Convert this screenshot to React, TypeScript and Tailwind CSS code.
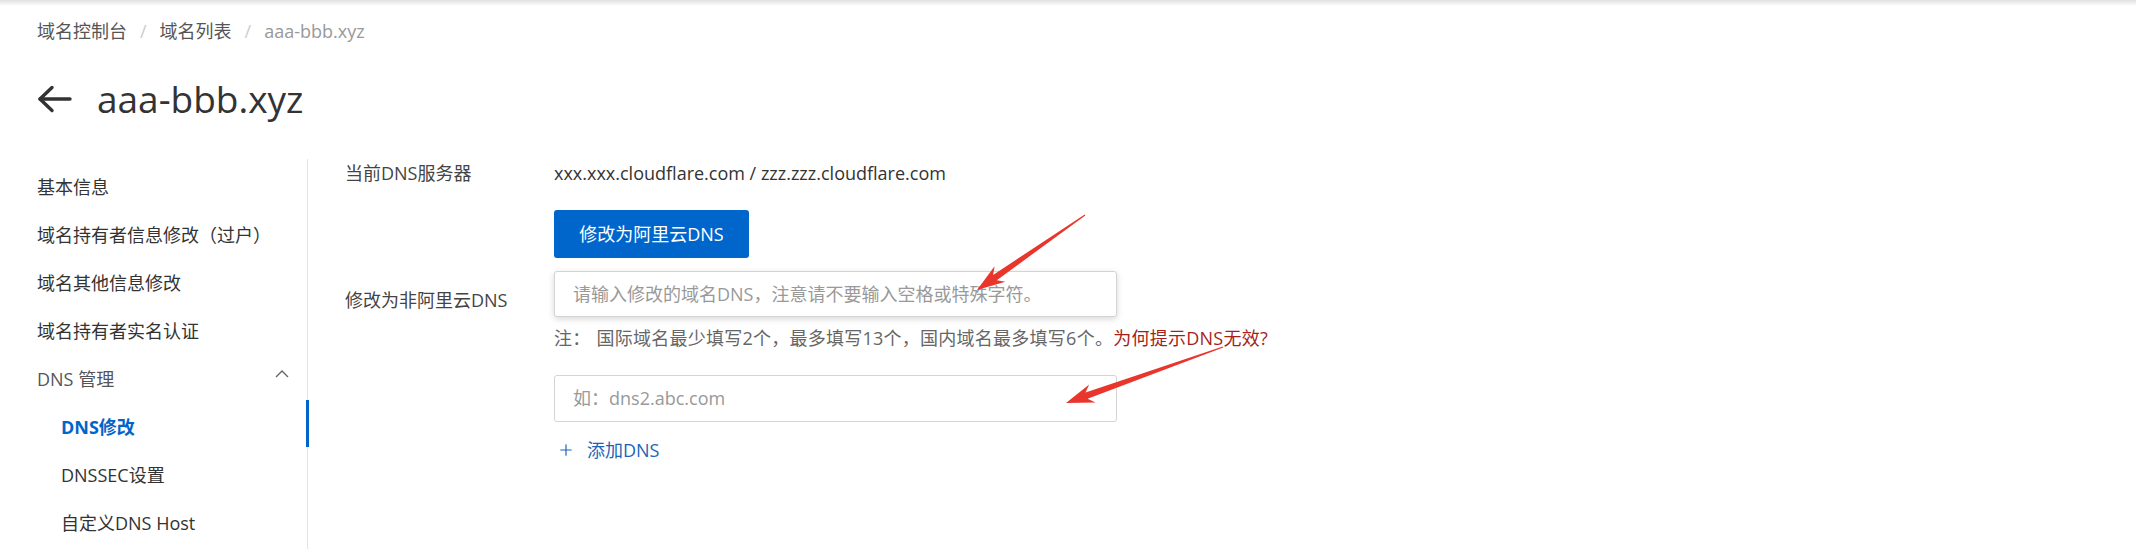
import { Plus } from 'lucide-react'

const sideItems = [
  { label: '基本信息' },
  { label: '域名持有者信息修改（过户）' },
  { label: '域名其他信息修改' },
  { label: '域名持有者实名认证' },
]

const dnsChildren = [
  { label: 'DNS修改', active: true },
  { label: 'DNSSEC设置' },
  { label: '自定义DNS Host' },
]

// annotation arrow: thin tail growing into a filled head at (x2, y2)
function arrowPoints(x1: number, y1: number, x2: number, y2: number) {
  const dx = x2 - x1
  const dy = y2 - y1
  const len = Math.hypot(dx, dy)
  const ux = dx / len
  const uy = dy / len
  const nx = -uy
  const ny = ux
  const headLen = 28
  const join = { x: x2 - ux * headLen * 0.78, y: y2 - uy * headLen * 0.78 }
  const barb = { x: x2 - ux * headLen, y: y2 - uy * headLen }
  const pts = [
    [x1 + nx * 0.6, y1 + ny * 0.6],
    [join.x + nx * 3.2, join.y + ny * 3.2],
    [barb.x + nx * 9.5, barb.y + ny * 9.5],
    [x2, y2],
    [barb.x - nx * 9.5, barb.y - ny * 9.5],
    [join.x - nx * 3.2, join.y - ny * 3.2],
    [x1 - nx * 0.6, y1 - ny * 0.6],
  ]
  return pts.map(p => p.map(v => v.toFixed(1)).join(',')).join(' ')
}

export default function App() {
  return (
    <div className="relative w-full h-[549px] overflow-hidden bg-white text-[18px] text-[#333] font-['Open_Sans','Noto_Sans_CJK_SC',sans-serif]">
      <div className="h-[6px] bg-linear-to-b from-[#e0e0e0] to-white" />

      {/* breadcrumb */}
      <div className="flex items-center px-[37px] mt-[13px] h-[24px] leading-[24px] text-[18px]">
        <span className="text-[#555]">域名控制台</span>
        <span className="mx-[13px] text-[#ccc]">/</span>
        <span className="text-[#555]">域名列表</span>
        <span className="mx-[13px] text-[#ccc]">/</span>
        <span className="text-[#999]">aaa-bbb.xyz</span>
      </div>

      {/* title */}
      <div className="flex items-center gap-[25px] px-[37px] mt-[32px] h-[48px]">
        <svg width="35" height="28" viewBox="0 0 35 28" fill="none" stroke="#333" strokeWidth="3.4" strokeLinecap="round" strokeLinejoin="round">
          <path d="M3 14h30" />
          <path d="M15 2.5 3 14l12 11.5" />
        </svg>
        <h1 className="text-[37px] leading-[48px] text-[#333]">aaa-bbb.xyz</h1>
      </div>

      <div className="flex mt-[36px]">
        {/* sidebar */}
        <nav className="w-[308px] shrink-0 h-[400px] border-r border-[#e3e3e3] pt-[4px]">
          {sideItems.map(item => (
            <div key={item.label} className="h-[48px] flex items-center pl-[37px] text-[#333]">{item.label}</div>
          ))}
          <div className="h-[48px] flex items-center justify-between pl-[37px] pr-[18px] text-[#555]">
            <span>DNS 管理</span>
            <svg width="14" height="9" viewBox="0 0 14 9" fill="none" stroke="#666" strokeWidth="1.4" className="-mt-[12px]">
              <path d="M1 8 7 2l6 6" />
            </svg>
          </div>
          {dnsChildren.map(item => (
            <div
              key={item.label}
              className={`relative h-[48px] flex items-center pl-[61px] ${item.active ? 'text-[#0064c8] font-bold' : 'text-[#333]'}`}
            >
              {item.label}
              {item.active && <span className="absolute -right-[2px] -top-[3px] w-[3px] h-[47px] bg-[#0064c8]" />}
            </div>
          ))}
        </nav>

        {/* content */}
        <div className="pl-[37px] pt-[2px]">
          <div className="grid grid-cols-[209px_1fr]">
            <div className="h-[24px] leading-[24px] text-[#444]">当前DNS服务器</div>
            <div className="h-[24px] leading-[24px] text-[#333]">xxx.xxx.cloudflare.com / zzz.zzz.cloudflare.com</div>

            <div />
            <div className="pt-[25px]">
              <button className="w-[195px] h-[48px] rounded-[3px] bg-[#0066cc] text-white text-[18px]">修改为阿里云DNS</button>
            </div>

            <div className="pt-[13px] h-[59px] flex items-center text-[#444]">
              <span className="mt-[13px]">修改为非阿里云DNS</span>
            </div>
            <div className="pt-[13px]">
              <div className="w-[563px] h-[46px] rounded-[3px] border border-[#d4d4d4] bg-white shadow-[0_2px_6px_rgba(0,0,0,0.16)] flex items-center px-[18px] text-[#999]">
                请输入修改的域名DNS，注意请不要输入空格或特殊字符。
              </div>
              <div className="mt-[9px] h-[24px] leading-[24px] text-[#666] whitespace-nowrap tracking-[0.25px]">
                注：<span className="ml-[6px]">国际域名最少填写2个，最多填写13个，国内域名最多填写6个。</span>
                <span className="text-[#a51f1b]">为何提示DNS无效?</span>
              </div>
              <div className="mt-[25px] w-[563px] h-[47px] rounded-[3px] border border-[#d4d4d4] bg-white flex items-center px-[18px] text-[#999]">
                如：dns2.abc.com
              </div>
              <div className="mt-[16px] h-[24px] flex items-center gap-[12px] pl-[3px] text-[#1b64b8]">
                <Plus size={18} strokeWidth={1.6} />
                <span>添加DNS</span>
              </div>
            </div>
          </div>
        </div>
      </div>

      {/* red annotation arrows */}
      <svg className="absolute inset-0 pointer-events-none" width="2136" height="549">
        <polygon points={arrowPoints(1085, 215, 977, 290)} fill="#e8362c" />
        <polygon points={arrowPoints(1223, 347, 1066, 403)} fill="#e8362c" />
      </svg>
    </div>
  )
}
